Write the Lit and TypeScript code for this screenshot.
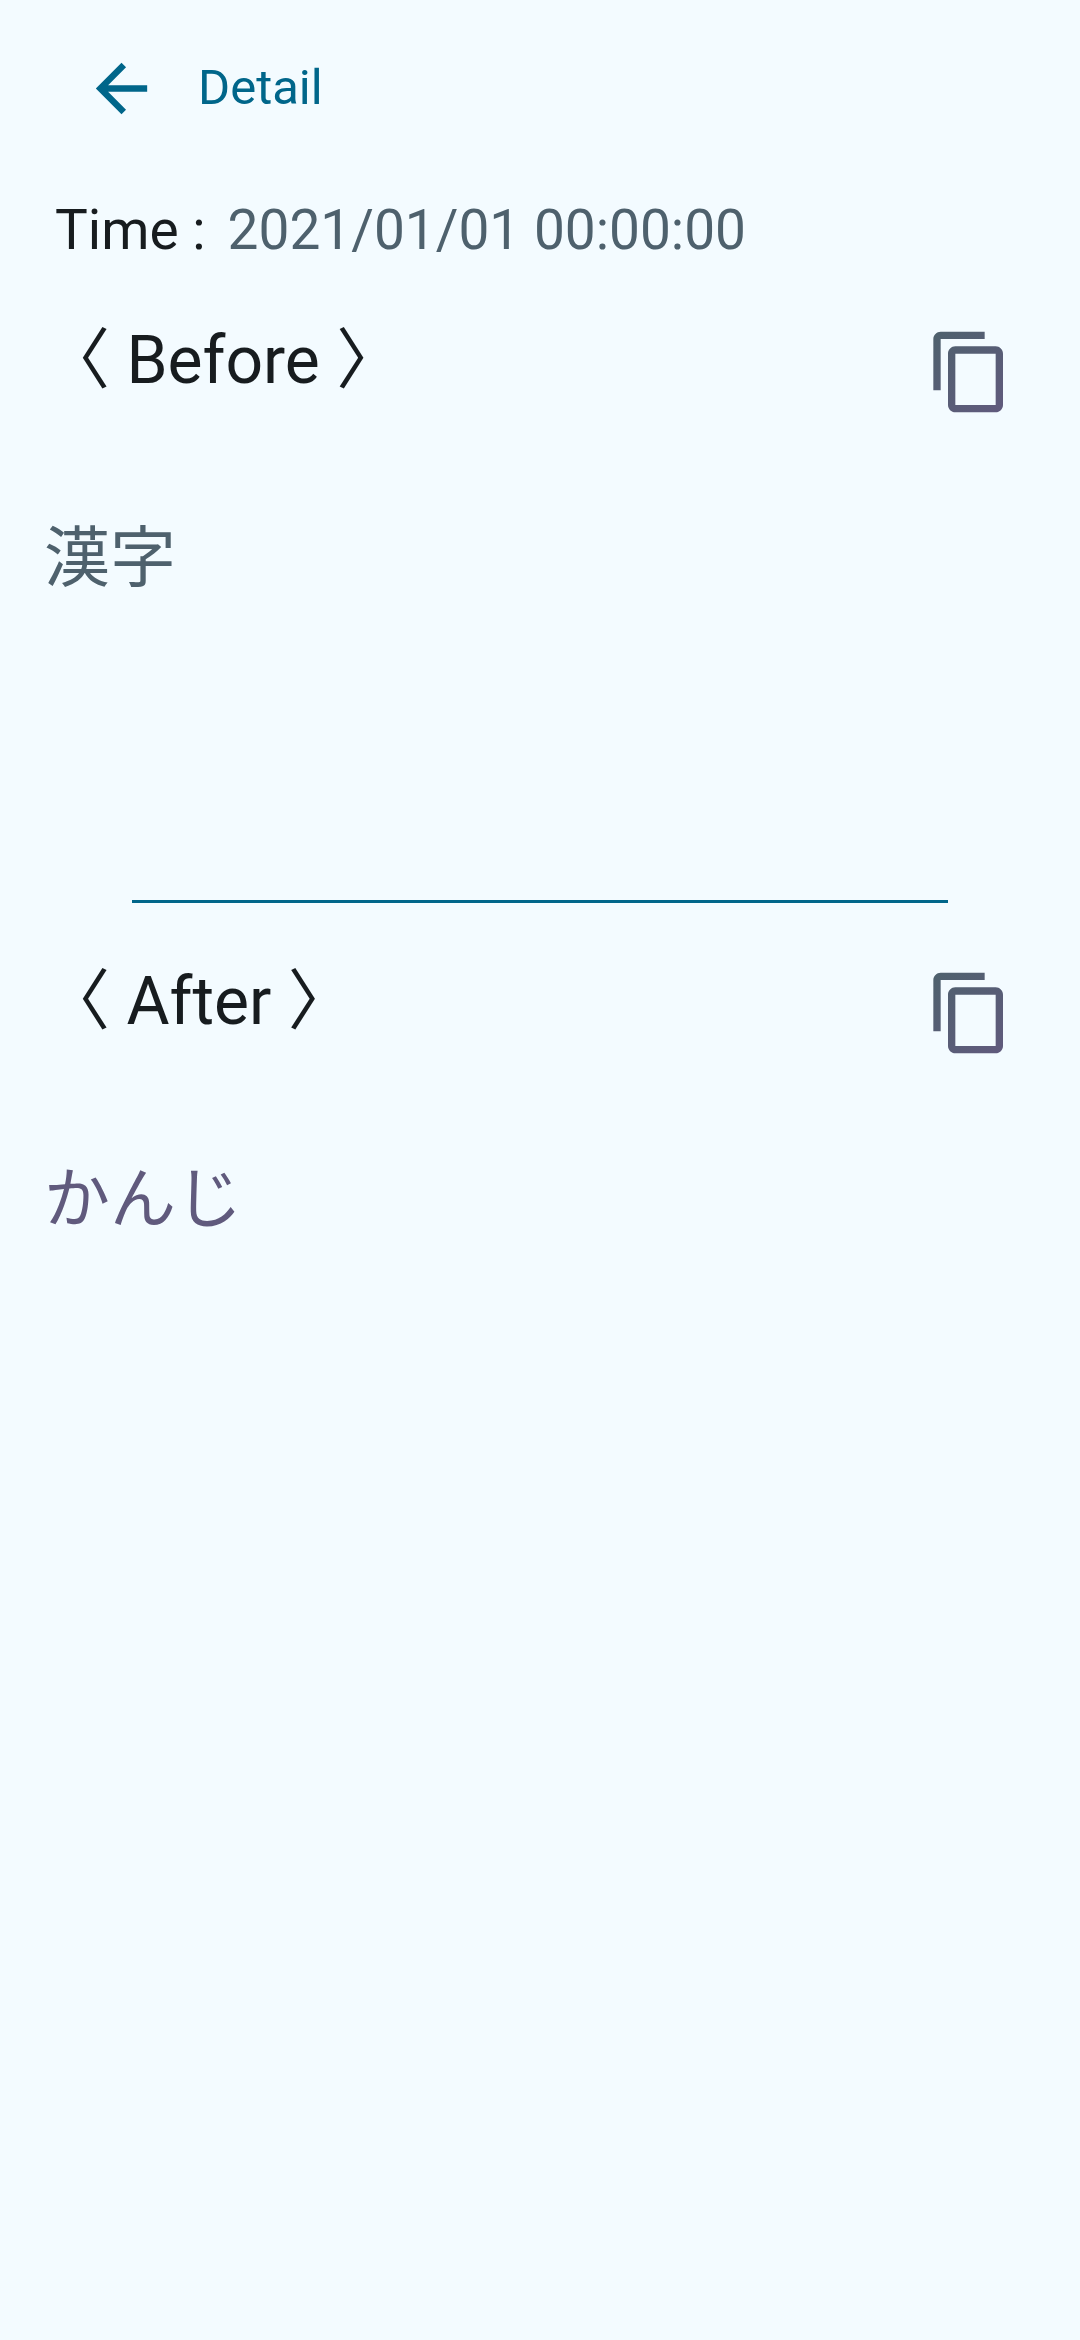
import { LitElement, html, css } from "lit";
import { customElement, property } from "lit/decorators.js";

@customElement("copy-button")
class CopyButton extends LitElement {
  @property() label = "";

  static styles = css`
    :host {
      display: block;
    }
    .button {
      display: grid;
      place-items: center;
      width: 132px;
      height: 132px;
      padding: 0;
      border: 0;
      border-radius: 50%;
      background: none;
      cursor: pointer;
    }
    .icon {
      display: block;
      width: 88px;
      height: 88px;
    }
  `;

  render() {
    return html`
      <button class="button" type="button" aria-label=${this.label}>
        <svg class="icon" viewBox="0 0 24 24" aria-hidden="true">
          <defs>
            <linearGradient id="tint" gradientUnits="userSpaceOnUse" x1="2" y1="1" x2="21" y2="23">
              <stop offset="0" stop-color="#4e616d" />
              <stop offset="1" stop-color="#605a7d" />
            </linearGradient>
          </defs>
          <path
            fill="url(#tint)"
            d="M16 1H4c-1.1 0-2 .9-2 2v14h2V3h12V1zm3 4H8c-1.1 0-2 .9-2 2v14c0 1.1.9 2 2 2h11c1.1 0 2-.9 2-2V7c0-1.1-.9-2-2-2zm0 16H8V7h11v14z"
          />
        </svg>
      </button>
    `;
  }
}

@customElement("text-section")
class TextSection extends LitElement {
  @property() heading = "";
  @property() text = "";
  @property() tone = "secondary";

  static styles = css`
    :host {
      display: block;
    }
    .section {
      padding: 0 44px;
    }
    .head {
      display: flex;
      justify-content: space-between;
      align-items: flex-start;
    }
    .title {
      margin: 0;
      padding-top: 14px;
      font-size: 66px;
      line-height: 82px;
      font-weight: 400;
      color: #171c1f;
    }
    .text {
      margin: 0;
      padding-top: 80px;
      min-height: 382px;
      font-size: 66px;
      line-height: 82px;
      overflow-wrap: anywhere;
    }
    .secondary {
      color: #4e616d;
    }
    .tertiary {
      color: #605a7d;
    }
  `;

  render() {
    return html`
      <section class="section">
        <div class="head">
          <h2 class="title">〈 ${this.heading} 〉</h2>
          <copy-button label="Copy ${this.heading}"></copy-button>
        </div>
        <p class="text ${this.tone}">${this.text}</p>
      </section>
    `;
  }
}

@customElement("app-root")
class AppRoot extends LitElement {
  static styles = css`
    :host {
      display: block;
      min-height: 100vh;
      background: #f3fbff;
      font-family: Roboto, "Noto Sans CJK JP", sans-serif;
    }
    .bar {
      display: flex;
      align-items: center;
      gap: 16px;
      height: 176px;
      padding: 0 60px;
      color: #00668a;
    }
    .back {
      display: grid;
      place-items: center;
      width: 122px;
      height: 122px;
      padding: 0;
      border: 0;
      border-radius: 50%;
      background: none;
      color: inherit;
      cursor: pointer;
    }
    .arrow {
      display: block;
      width: 77px;
      height: 77px;
    }
    .name {
      margin: 0;
      font-size: 49px;
      line-height: 64px;
      font-weight: 400;
    }
    .time {
      display: flex;
      gap: 22px;
      margin: 0;
      padding: 22px 55px 44px;
      font-size: 55px;
      line-height: 64px;
    }
    .key {
      color: #171c1f;
    }
    .value {
      margin: 0;
      color: #4e616d;
    }
    .rule {
      height: 3px;
      margin: 0 132px 44px;
      border: 0;
      background: #00668a;
    }
  `;

  render() {
    return html`
      <header class="bar">
        <button class="back" type="button" aria-label="Back">
          <svg class="arrow" viewBox="0 0 24 24" aria-hidden="true">
            <path fill="currentColor" d="M20 11H7.83l5.59-5.59L12 4l-8 8 8 8 1.41-1.41L7.83 13H20v-2z" />
          </svg>
        </button>
        <h1 class="name">Detail</h1>
      </header>
      <main>
        <dl class="time">
          <dt class="key">Time :</dt>
          <dd class="value">2021/01/01 00:00:00</dd>
        </dl>
        <text-section heading="Before" text="漢字" tone="secondary"></text-section>
        <hr class="rule" />
        <text-section heading="After" text="かんじ" tone="tertiary"></text-section>
      </main>
    `;
  }
}
